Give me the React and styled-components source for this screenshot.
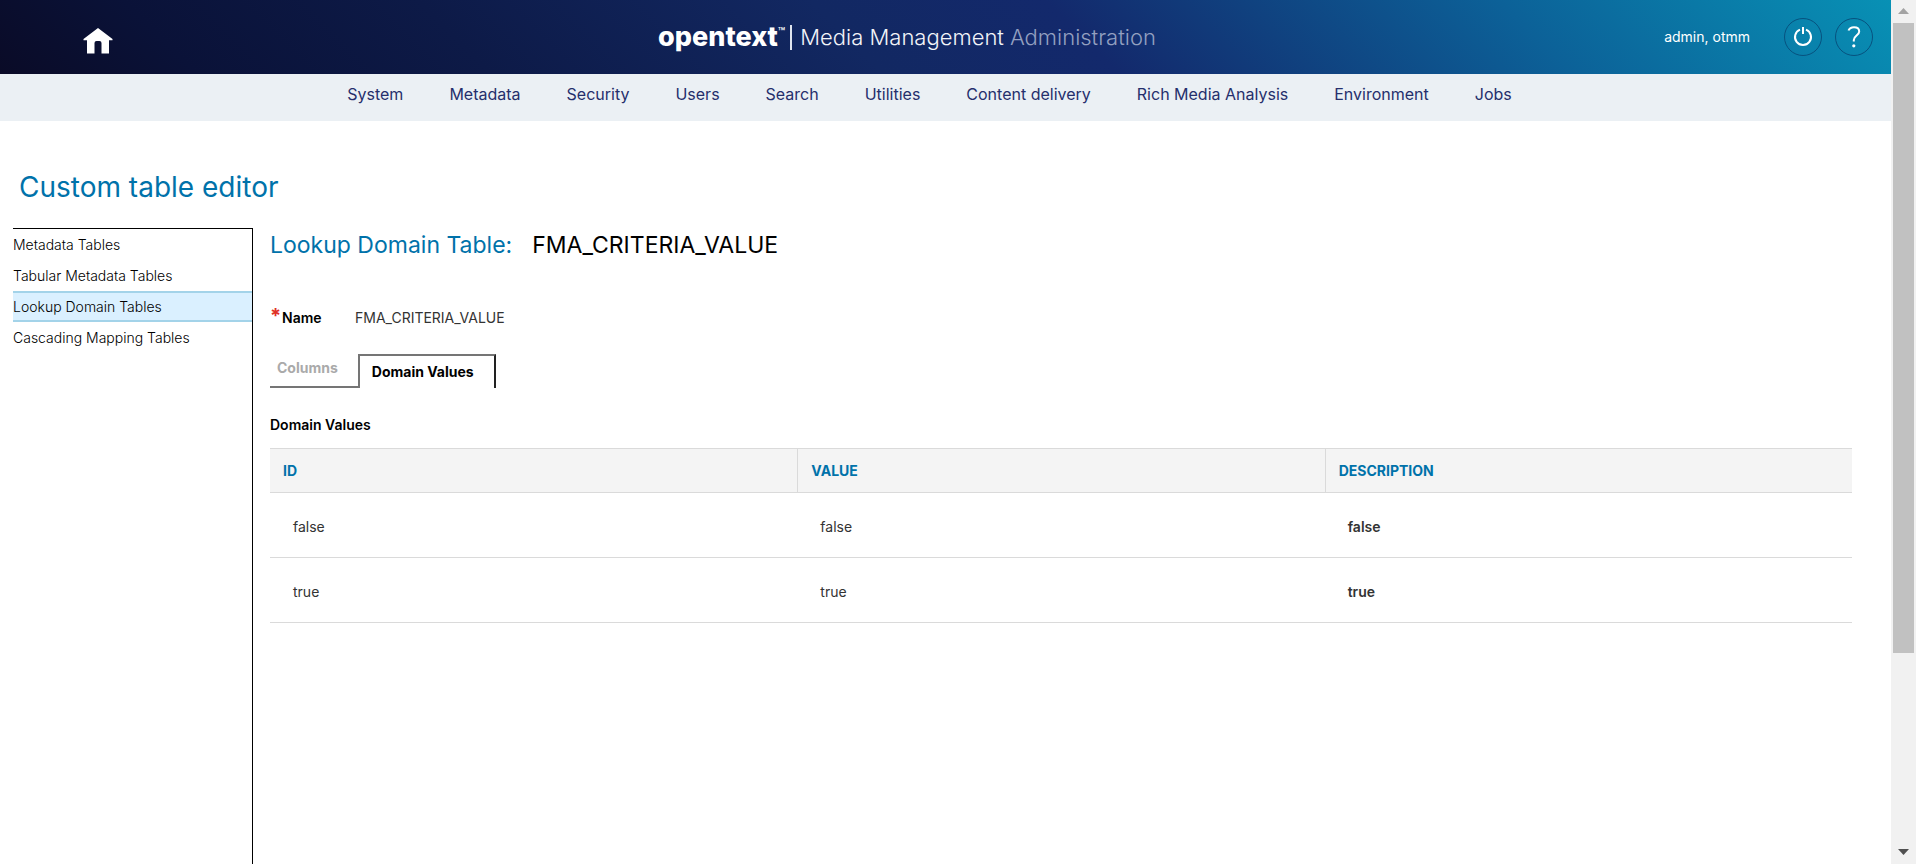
import React from "react";
import styled, { createGlobalStyle } from "styled-components";

const GlobalStyle = createGlobalStyle`
  *, *::before, *::after { box-sizing: border-box; }
  body {
    margin: 0;
    background: #fff;
    color: #000;
    font-family: Inter, Roboto, "Liberation Sans", sans-serif;
    font-size: 14px;
    line-height: 20px;
  }
`;

const Window = styled.div`
  display: flex;
  height: 100vh;
  overflow: hidden;
`;

const Page = styled.div`
  flex: 1;
  min-width: 0;
  display: flex;
  flex-direction: column;
`;

const Header = styled.header`
  display: grid;
  grid-template-columns: 1fr auto 1fr;
  align-items: center;
  height: 74px;
  flex: none;
  padding: 0 18px 0 81px;
  background: linear-gradient(45deg, #0a0b27 0%, #0a1238 10%, #0d1a47 25%, #122862 45%, #13296c 57%, #0c6198 80%, #0891b5 100%);
  color: #fff;
`;

const HomeLink = styled.a`
  justify-self: start;
  display: flex;
  padding: 8px 2px 0;
  color: #fff;
`;

const Brand = styled.div`
  display: flex;
  align-items: center;
  margin-right: 140px;
  font-size: 22px;
  line-height: 30px;
  font-weight: 300;
  white-space: nowrap;
`;

const BrandName = styled.span`
  font-size: 27px;
  font-weight: 800;
`;

const Trademark = styled.sup`
  align-self: flex-start;
  font-size: 12px;
  line-height: 20px;
  font-weight: 500;
`;

const BrandRule = styled.span`
  width: 2px;
  height: 25px;
  margin: 0 8px 0 5px;
  background: #dfe4ee;
`;

const Product = styled.span`
  color: #f2f4f9;
`;

const ProductArea = styled.span`
  margin-left: 6px;
  color: #93a0c0;
`;

const Account = styled.div`
  justify-self: end;
  display: flex;
  align-items: center;
  gap: 13px;
`;

const UserName = styled.span`
  margin-right: 21px;
  white-space: nowrap;
`;

const RoundButton = styled.button`
  display: grid;
  place-items: center;
  width: 38px;
  height: 38px;
  padding: 0;
  border: 1px solid #07527f;
  border-radius: 50%;
  background: none;
  color: #fff;
  cursor: pointer;
`;

const Nav = styled.nav`
  display: flex;
  justify-content: center;
  gap: 46px;
  height: 47px;
  flex: none;
  padding: 8px 32px 0 0;
  background: #ebf0f4;
`;

const NavLink = styled.a`
  color: #252f6c;
  font-size: 16px;
  line-height: 24px;
  text-decoration: none;
  white-space: nowrap;
`;

const PageTitle = styled.h1`
  margin: 48px 0 23px;
  padding-left: 19px;
  color: #0072aa;
  font-size: 28px;
  line-height: 36px;
  font-weight: 400;
`;

const Body = styled.div`
  display: flex;
  flex: 1;
  min-height: 0;
  padding-left: 13px;
`;

const Sidebar = styled.nav`
  width: 240px;
  flex: none;
  border-top: 1px solid #000;
  border-right: 1px solid #000;
`;

const SideList = styled.ul`
  margin: 0;
  padding: 0;
  list-style: none;
`;

const SideLink = styled.a`
  display: block;
  padding: 4px 0;
  border: solid ${(p) => (p.$active ? "#a3d3e9" : "transparent")};
  border-width: 2px 0;
  background: ${(p) => (p.$active ? "#daf0ff" : "none")};
  color: #000;
  line-height: 19px;
  font-weight: 300;
  text-decoration: none;
`;

const Content = styled.main`
  flex: 1;
  min-width: 0;
  padding: 0 39px 0 17px;
`;

const TableTitle = styled.h2`
  display: flex;
  align-items: baseline;
  gap: 20px;
  margin: 0;
  color: #0072aa;
  font-size: 23px;
  line-height: 34px;
  font-weight: 400;
`;

const TableName = styled.span`
  color: #000;
`;

const Field = styled.div`
  display: flex;
  margin: 46px 0 26px;
`;

const Required = styled.span`
  width: 12px;
  color: #e03127;
  font-size: 20px;
  line-height: 16px;
  font-weight: 700;
`;

const FieldLabel = styled.span`
  width: 73px;
  font-weight: 600;
`;

const FieldValue = styled.span`
  color: #333;
`;

const Tabs = styled.div`
  display: flex;
`;

const Tab = styled.button`
  height: 34px;
  border: solid #757575;
  border-width: ${(p) => (p.$active ? "2px 2px 0 2px" : "0 0 2px")};
  border-right-color: ${(p) => (p.$active ? "#222" : "#757575")};
  padding: ${(p) => (p.$active ? "0 20px 0 12px" : "0 20px 4px 7px")};
  background: none;
  color: ${(p) => (p.$active ? "#000" : "#aaa")};
  font: inherit;
  font-weight: 700;
  cursor: pointer;
`;

const Section = styled.h3`
  margin: 27px 0 13px;
  font-size: 14px;
  line-height: 20px;
  font-weight: 600;
`;

const Table = styled.table`
  width: 100%;
  table-layout: fixed;
  border-collapse: separate;
  border-spacing: 0;
`;

const HeadCell = styled.th`
  height: 45px;
  padding: 0 13px;
  border: solid #dadada;
  border-width: 1px 0;
  background: #f4f4f4;
  color: #0072aa;
  font-weight: 700;
  text-align: left;
  text-transform: uppercase;

  & + & {
    border-left-width: 1px;
  }
`;

const Cell = styled.td`
  height: 65px;
  padding: 4px 23px 0;
  border-bottom: 1px solid #dadada;
  color: #333;
  font-weight: ${(p) => (p.$strong ? 600 : 400)};
`;

const ScrollTrack = styled.div`
  display: flex;
  flex-direction: column;
  align-items: center;
  width: 25px;
  flex: none;
  background: #f1f1f1;
`;

const ScrollThumb = styled.div`
  width: 21px;
  flex: 630 0 0;
  background: #c1c1c1;
`;

const ScrollRest = styled.div`
  flex: 188 0 0;
`;

const ScrollArrow = styled.svg`
  width: 25px;
  height: 23px;
  flex: none;
`;

const navItems = [
  "System",
  "Metadata",
  "Security",
  "Users",
  "Search",
  "Utilities",
  "Content delivery",
  "Rich Media Analysis",
  "Environment",
  "Jobs",
];

const sideItems = [
  "Metadata Tables",
  "Tabular Metadata Tables",
  "Lookup Domain Tables",
  "Cascading Mapping Tables",
];

const rows = [
  { id: "false", value: "false", description: "false" },
  { id: "true", value: "true", description: "true" },
];

export default function App() {
  return (
    <>
      <GlobalStyle />
      <Window>
        <Page>
          <Header>
            <HomeLink href="#home" aria-label="Home">
              <svg width="31" height="26" viewBox="0 0 31 26" fill="currentColor">
                <path d="M15 0 29.500 11v1.200H26V25.500h-7.500V15q0-2-2-2h-3q-2 0-2 2v10.500H4V12.200H.5V11z" />
              </svg>
            </HomeLink>
            <Brand>
              <BrandName>opentext</BrandName>
              <Trademark>™</Trademark>
              <BrandRule />
              <Product>Media Management</Product>
              <ProductArea>Administration</ProductArea>
            </Brand>
            <Account>
              <UserName>admin, otmm</UserName>
              <RoundButton aria-label="Sign out">
                <svg width="20" height="20" viewBox="0 0 20 20" fill="none" stroke="currentColor" strokeWidth="2">
                  <path d="M7 2.600A8 8 0 1 0 13 2.600M10 0v7" />
                </svg>
              </RoundButton>
              <RoundButton aria-label="Help">
                <svg width="14" height="22" viewBox="0 0 14 22" fill="none" stroke="currentColor" strokeWidth="2">
                  <path d="M1.500 4.500C2.500 2 4.500 1.200 7 1.200c3 0 5.200 1.600 5.200 4.300 0 4-5.400 4.200-5.400 8.500v1.500" />
                  <circle cx="6.800" cy="19.800" r="1.600" fill="currentColor" stroke="none" />
                </svg>
              </RoundButton>
            </Account>
          </Header>
          <Nav aria-label="Main">
            {navItems.map((item) => (
              <NavLink key={item} href="#">{item}</NavLink>
            ))}
          </Nav>
          <PageTitle>Custom table editor</PageTitle>
          <Body>
            <Sidebar aria-label="Table types">
              <SideList>
                {sideItems.map((item) => (
                  <li key={item}>
                    <SideLink href="#" $active={item === "Lookup Domain Tables"}>{item}</SideLink>
                  </li>
                ))}
              </SideList>
            </Sidebar>
            <Content>
              <TableTitle>
                Lookup Domain Table: <TableName>FMA_CRITERIA_VALUE</TableName>
              </TableTitle>
              <Field>
                <Required>*</Required>
                <FieldLabel>Name</FieldLabel>
                <FieldValue>FMA_CRITERIA_VALUE</FieldValue>
              </Field>
              <Tabs role="tablist">
                <Tab role="tab" aria-selected="false">Columns</Tab>
                <Tab role="tab" aria-selected="true" $active>Domain Values</Tab>
              </Tabs>
              <Section>Domain Values</Section>
              <Table>
                <thead>
                  <tr>
                    <HeadCell>ID</HeadCell>
                    <HeadCell>Value</HeadCell>
                    <HeadCell>Description</HeadCell>
                  </tr>
                </thead>
                <tbody>
                  {rows.map((row) => (
                    <tr key={row.id}>
                      <Cell>{row.id}</Cell>
                      <Cell>{row.value}</Cell>
                      <Cell $strong>{row.description}</Cell>
                    </tr>
                  ))}
                </tbody>
              </Table>
            </Content>
          </Body>
        </Page>
        <ScrollTrack aria-hidden="true">
          <ScrollArrow viewBox="0 0 25 23">
            <path d="M7 14h11l-5.500-6z" fill="#a3a3a3" />
          </ScrollArrow>
          <ScrollThumb />
          <ScrollRest />
          <ScrollArrow viewBox="0 0 25 23">
            <path d="M7 8h11l-5.500 6z" fill="#505050" />
          </ScrollArrow>
        </ScrollTrack>
      </Window>
    </>
  );
}
